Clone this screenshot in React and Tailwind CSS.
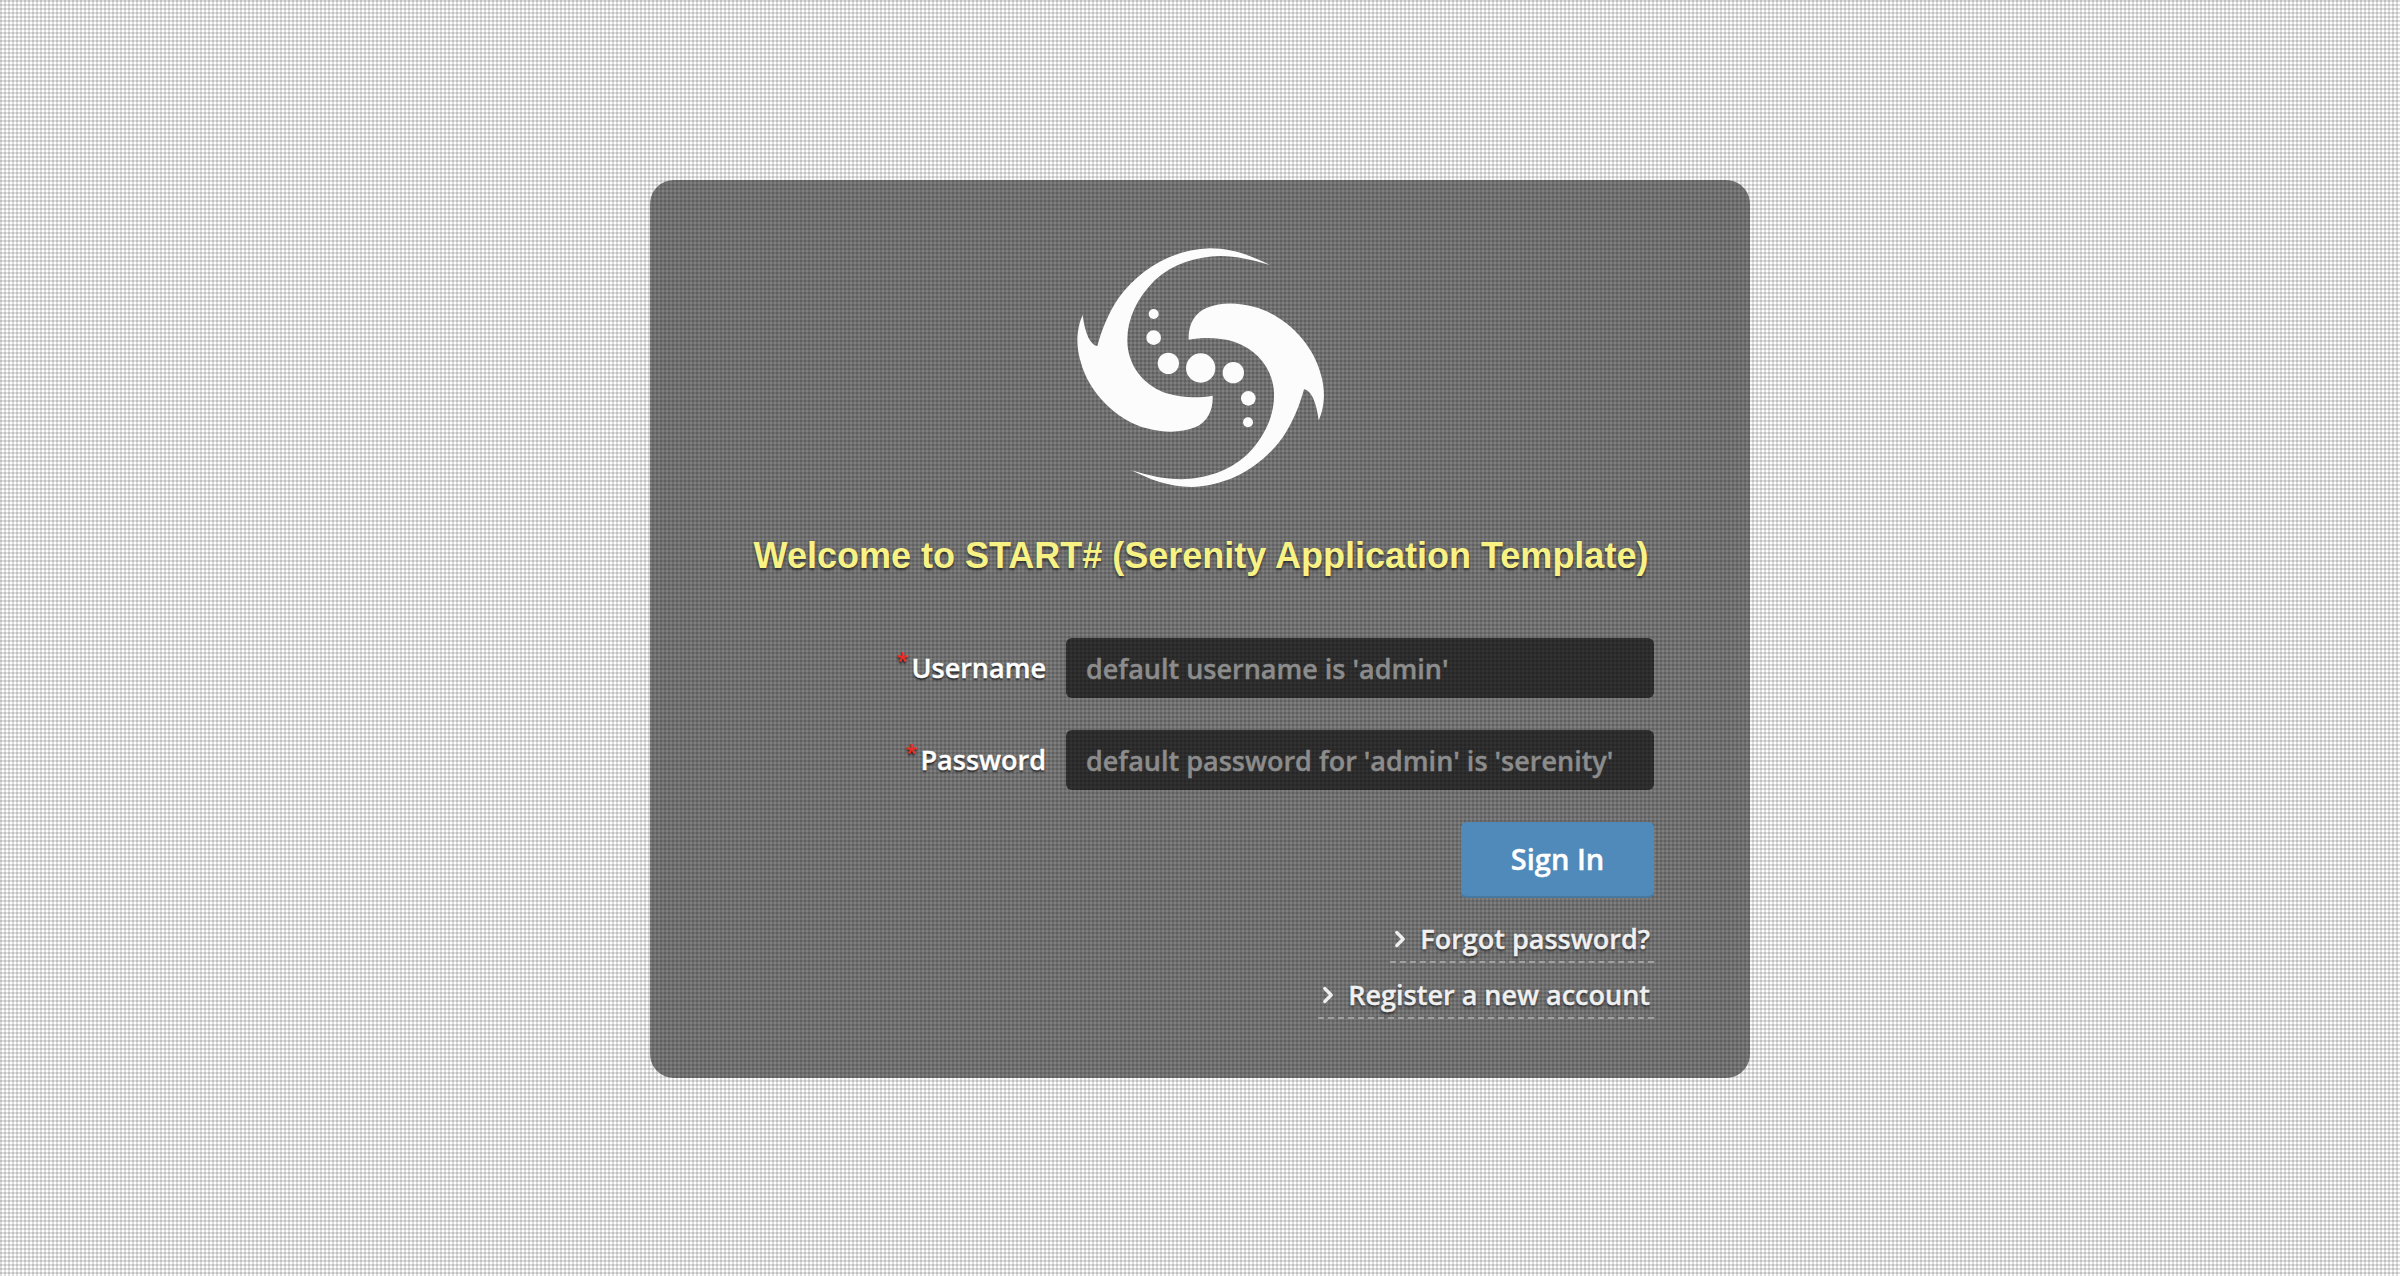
import { ChevronRight } from 'lucide-react'

const SWIRL =
  'M690 105 C640 80 580 55 510 55 C400 58 300 115 235 205 C205 250 185 300 172 348 C150 345 135 310 128 255 C112 290 105 340 122 395 C147 490 230 570 320 595 C370 608 420 610 465 592 C505 575 520 535 518 497 C480 503 430 506 380 490 C318 468 272 420 263 350 C256 280 285 210 345 150 C400 100 470 80 540 78 C590 78 640 90 690 105 Z'

function Logo() {
  return (
    <svg viewBox="0 0 960 810" className="w-[320px] h-[270px] block" fill="#fcfcfc">
      <path d={SWIRL} />
      <path d={SWIRL} transform="rotate(180 482 413)" />
      <circle cx="482" cy="414" r="44" />
      <circle cx="385" cy="400" r="32" />
      <circle cx="341" cy="323" r="22" />
      <circle cx="341" cy="252" r="15" />
      <circle cx="580" cy="428" r="32" />
      <circle cx="625" cy="505" r="22" />
      <circle cx="624" cy="577" r="15" />
    </svg>
  )
}

function Campo({ label, placeholder }) {
  return (
    <div className="flex items-center justify-end h-[60px]">
      <label className="flex items-start text-[27px] leading-[40px] font-semibold text-white [-webkit-text-stroke:0.4px_#fff] [text-shadow:0_2px_2px_rgba(0,0,0,0.7)]">
        <span className="text-[22px] leading-[22px] text-[#f02a20] [-webkit-text-stroke:0] mr-[3px]">*</span>
        {label}
      </label>
      <input
        placeholder={placeholder}
        className="ml-[20px] w-[588px] h-[60px] rounded-[6px] bg-black/60 px-[20px] text-[27px] font-semibold text-white placeholder:text-[#8c8c8c] [-webkit-text-stroke:0.4px_#8c8c8c] outline-none"
      />
    </div>
  )
}

function Link({ children }) {
  return (
    <a className="flex items-center h-[40px] pb-[6px] pr-[4px] border-b-2 border-dashed border-[#a0a0a0] text-[27px] font-semibold text-[#f0f0f0] [-webkit-text-stroke:0.4px_#f0f0f0] [text-shadow:0_2px_3px_rgba(0,0,0,0.7)]">
      <ChevronRight size={26} strokeWidth={3} className="mr-[7px] -ml-[3px] [-webkit-text-stroke:0]" />
      {children}
    </a>
  )
}

export default function App() {
  return (
    <div className="min-h-screen pt-[180px] bg-[#ffffff] bg-[linear-gradient(to_right,rgba(0,0,0,0.13)_50%,transparent_50%),linear-gradient(to_bottom,rgba(0,0,0,0.13)_50%,transparent_50%)] bg-[length:4px_4px] font-['Open_Sans',sans-serif]">
      <div className="w-[1100px] h-[898px] mx-auto rounded-[24px] bg-black/50 flex flex-col pt-[50px]">
        <div className="flex justify-center">
          <Logo />
        </div>
        <h1 className="mt-[34px] mb-[60px] text-center pl-[2px] text-[36px] leading-[44px] font-bold text-[#f8f284] font-['Liberation_Sans',sans-serif] [text-shadow:0_2px_3px_rgba(0,0,0,0.6)]">
          Welcome to START# (Serenity Application Template)
        </h1>
        <div className="pr-[96px] flex flex-col gap-[32px]">
          <Campo label="Username" placeholder="default username is 'admin'" />
          <Campo label="Password" placeholder="default password for 'admin' is 'serenity'" />
        </div>
        <div className="pr-[96px] flex flex-col items-end">
          <button className="mt-[32px] w-[193px] h-[76px] rounded-[6px] bg-[#4f8aba] border-b-2 border-[#47789f] text-[29px] font-semibold text-white [-webkit-text-stroke:0.4px_#fff]">
            Sign In
          </button>
          <div className="mt-[25px] flex flex-col items-end gap-[16px]">
            <Link>Forgot password?</Link>
            <Link>Register a new account</Link>
          </div>
        </div>
      </div>
    </div>
  )
}
